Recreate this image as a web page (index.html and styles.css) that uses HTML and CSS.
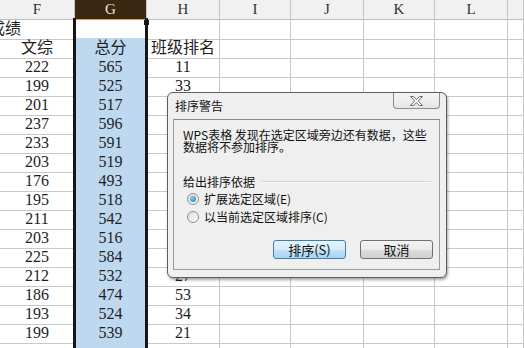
FILE: index.html
```html
<!DOCTYPE html>
<html>
<head>
    <meta charset="utf-8" />
    <title>排序警告</title>
    <link rel="stylesheet" href="styles.css">
</head>
<body>
    <div id="Sheet">

        <div class="row head">
            <div class="c">F</div><div class="c cur">G</div><div class="c">H</div><div class="c">I</div><div class="c">J</div><div class="c">K</div><div class="c">L</div><div class="c"></div>
        </div>
        <div class="row">
            <div class="c left"><span class="title">成绩</span></div><div class="c"></div><div class="c"></div><div class="c"></div><div class="c"></div><div class="c"></div><div class="c"></div><div class="c"></div>
        </div>
        <div class="row">
            <div class="c">文综</div><div class="c sel">总分</div><div class="c">班级排名</div><div class="c"></div><div class="c"></div><div class="c"></div><div class="c"></div><div class="c"></div>
        </div>
        <div class="row"><div class="c">222</div><div class="c sel">565</div><div class="c">11</div><div class="c"></div><div class="c"></div><div class="c"></div><div class="c"></div><div class="c"></div></div>
        <div class="row"><div class="c">199</div><div class="c sel">525</div><div class="c">33</div><div class="c"></div><div class="c"></div><div class="c"></div><div class="c"></div><div class="c"></div></div>
        <div class="row"><div class="c">201</div><div class="c sel">517</div><div class="c">38</div><div class="c"></div><div class="c"></div><div class="c"></div><div class="c"></div><div class="c"></div></div>
        <div class="row"><div class="c">237</div><div class="c sel">596</div><div class="c">2</div><div class="c"></div><div class="c"></div><div class="c"></div><div class="c"></div><div class="c"></div></div>
        <div class="row"><div class="c">233</div><div class="c sel">591</div><div class="c">4</div><div class="c"></div><div class="c"></div><div class="c"></div><div class="c"></div><div class="c"></div></div>
        <div class="row"><div class="c">203</div><div class="c sel">519</div><div class="c">37</div><div class="c"></div><div class="c"></div><div class="c"></div><div class="c"></div><div class="c"></div></div>
        <div class="row"><div class="c">176</div><div class="c sel">493</div><div class="c">49</div><div class="c"></div><div class="c"></div><div class="c"></div><div class="c"></div><div class="c"></div></div>
        <div class="row"><div class="c">195</div><div class="c sel">518</div><div class="c">36</div><div class="c"></div><div class="c"></div><div class="c"></div><div class="c"></div><div class="c"></div></div>
        <div class="row"><div class="c">211</div><div class="c sel">542</div><div class="c">19</div><div class="c"></div><div class="c"></div><div class="c"></div><div class="c"></div><div class="c"></div></div>
        <div class="row"><div class="c">203</div><div class="c sel">516</div><div class="c">39</div><div class="c"></div><div class="c"></div><div class="c"></div><div class="c"></div><div class="c"></div></div>
        <div class="row"><div class="c">225</div><div class="c sel">584</div><div class="c">6</div><div class="c"></div><div class="c"></div><div class="c"></div><div class="c"></div><div class="c"></div></div>
        <div class="row"><div class="c">212</div><div class="c sel">532</div><div class="c">27</div><div class="c"></div><div class="c"></div><div class="c"></div><div class="c"></div><div class="c"></div></div>
        <div class="row"><div class="c">186</div><div class="c sel">474</div><div class="c">53</div><div class="c"></div><div class="c"></div><div class="c"></div><div class="c"></div><div class="c"></div></div>
        <div class="row"><div class="c">193</div><div class="c sel">524</div><div class="c">34</div><div class="c"></div><div class="c"></div><div class="c"></div><div class="c"></div><div class="c"></div></div>
        <div class="row"><div class="c">199</div><div class="c sel">539</div><div class="c">21</div><div class="c"></div><div class="c"></div><div class="c"></div><div class="c"></div><div class="c"></div></div>
        <div class="row"><div class="c"></div><div class="c sel"></div><div class="c"></div><div class="c"></div><div class="c"></div><div class="c"></div><div class="c"></div><div class="c"></div></div>

        <div id="Selection"><div class="handle"></div></div>
    </div>

    <div id="SortDialog">
        <div class="titlebar">
            <span class="caption">排序警告</span>
            <div class="close">
                <svg width="13" height="10" viewBox="0 0 13 10">
                    <polygon points="0.5,0.5 3.5,0.5 6.5,3.3 9.5,0.5 12.5,0.5 8.3,5 12.5,9.5 9.5,9.5 6.5,6.7 3.5,9.5 0.5,9.5 4.7,5" fill="#fafafa" stroke="#6a6a6a" stroke-width="1" />
                </svg>
            </div>
        </div>
        <div class="panel">
            <div class="message">WPS表格 发现在选定区域旁边还有数据，这些<br />数据将不参加排序。</div>
            <div class="group">
                <span>给出排序依据</span>
                <div class="groove"></div>
            </div>
            <label class="option"><span class="radio checked"></span>扩展选定区域(E)</label>
            <label class="option"><span class="radio"></span>以当前选定区域排序(C)</label>
            <div class="buttons">
                <button class="btn default">排序(S)</button>
                <button class="btn">取消</button>
            </div>
        </div>
    </div>
</body>
</html>
```

FILE: styles.css
```css
body { margin: 0; width: 524px; height: 348px; overflow: hidden; background-color: #fff; font-family: "Liberation Serif", "Noto Sans CJK SC", serif; font-size: 16px; color: #1e1e1e; position: relative; }

#Sheet { position: relative; height: 348px; }
.row { display: grid; grid-template-columns: 75px 72px 73px 71px 73px 71px 73px 1fr; height: 19px; }
.c { box-sizing: border-box; border-right: solid 1px #c8c8c8; border-bottom: solid 1px #c8c8c8; text-align: center; line-height: 20px; white-space: nowrap; }
.c.left { text-align: left; }
.c.sel { background-color: #bed8f0; }
.c span.title { margin-left: -11px; }

.row.head .c { background-color: #f1f1f1; border-right-color: #c4c4c4; border-bottom-color: #bcbcbc; font-size: 15px; color: #333; line-height: 19px; }
.row.head .c.cur { background-color: #3c2812; color: #efe4d6; border-bottom-color: #e1a15c; }

#Selection { position: absolute; left: 73px; top: 18px; width: 75px; bottom: 0; box-sizing: border-box; border-left: solid 3px #161616; border-right: solid 3px #161616; }
#Selection .handle { position: absolute; right: -4px; top: 2px; width: 5px; height: 5px; background-color: #161616; }

#SortDialog { position: absolute; left: 167px; top: 92px; width: 280px; height: 186px; box-sizing: border-box; border: solid 1px #5e5e5e; border-radius: 6px; background-color: #efefef; box-shadow: 1px 2px 3px rgba(0, 0, 0, 0.35); font-family: "Noto Sans CJK SC", "DejaVu Sans", sans-serif; font-size: 12px; color: #111; display: flex; flex-direction: column; }
.titlebar { height: 26px; display: flex; justify-content: space-between; align-items: flex-start; padding: 0 6px 0 7px; }
.caption { line-height: 12px; margin-top: 7px; }
.close { width: 47px; height: 16px; box-sizing: border-box; border: solid 1px #8c8c8c; border-top: none; border-radius: 0 0 4px 4px; background: linear-gradient(#f4f4f4, #e6e6e6); display: flex; align-items: center; justify-content: center; }

.panel { flex: 1; margin: 0 6px 7px 5px; border: solid 1px #9b9b9b; border-top-color: #8a8a8a; background-color: #efefef; padding: 9px 6px 0 9px; display: flex; flex-direction: column; }
.message { line-height: 12px; }
.group { display: flex; align-items: center; margin-top: 23px; line-height: 12px; }
.groove { flex: 1; margin-left: 6px; margin-right: 2px; border-top: solid 1px #d3d3d3; border-bottom: solid 1px #fbfbfb; }

.option { display: flex; align-items: center; height: 18px; margin-top: 2px; padding-left: 4px; line-height: 12px; }
.option + .option { margin-top: 0; }
.radio { width: 12px; height: 12px; box-sizing: border-box; border: solid 1px #8e8f8f; border-radius: 50%; background: linear-gradient(135deg, #dcdcdc, #fbfbfb); margin-right: 5px; position: relative; }
.radio.checked::after { content: ""; position: absolute; left: 2px; top: 2px; width: 6px; height: 6px; border-radius: 50%; background: radial-gradient(circle at 35% 35%, #8ad0f4, #1f6ea8); }

.buttons { display: flex; justify-content: flex-end; gap: 14px; margin-top: 14px; }
.btn { width: 73px; height: 19px; box-sizing: border-box; border: solid 1px #707070; border-radius: 3px; background: linear-gradient(#f3f3f3 0%, #ebebeb 50%, #dcdcdc 51%, #d0d0d0 100%); font-family: "Noto Sans CJK SC", sans-serif; font-size: 13px; color: #111; padding: 0; line-height: 16px; }
.btn.default { border-color: #3c7fb1; background: linear-gradient(#e6f4fc 0%, #d6ebf9 50%, #bfe1f7 51%, #a9d5f3 100%); }
```
